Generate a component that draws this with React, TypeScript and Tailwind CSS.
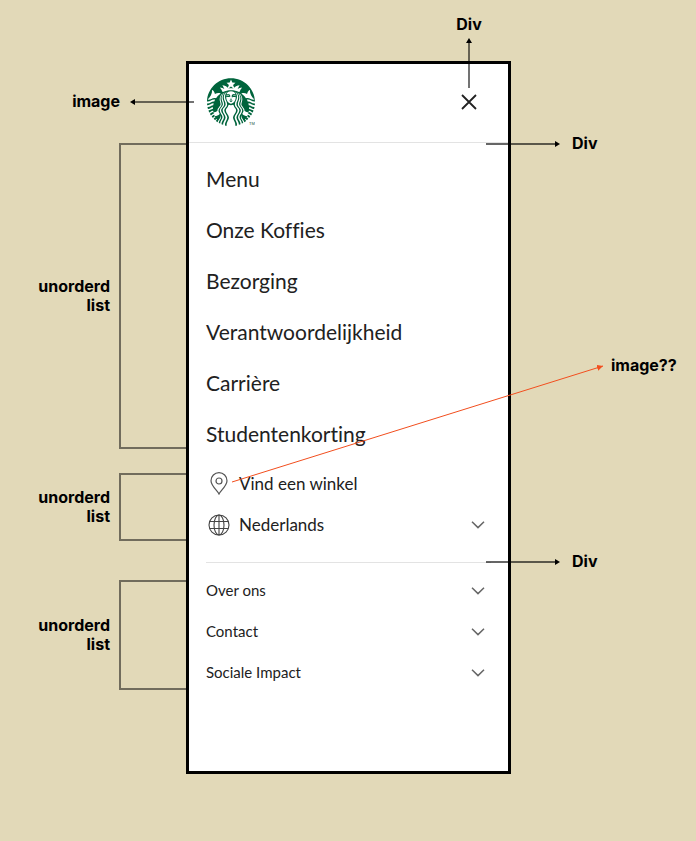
import type { ReactNode } from "react";
import { SiStarbucks } from "react-icons/si";

const menuItems = ["Menu", "Onze Koffies", "Bezorging", "Verantwoordelijkheid", "Carrière", "Studentenkorting"];
const footerItems = ["Over ons", "Contact", "Sociale Impact"];

function Chevron() {
  return (
    <svg viewBox="0 0 14 8" className="h-2 w-3.5 shrink-0" fill="none" stroke="#666" strokeWidth="1.5" aria-hidden="true">
      <path d="M1 0.8 7 6.6 13 0.8" />
    </svg>
  );
}

function PinIcon() {
  return (
    <svg viewBox="0 0 18 23" className="h-[23px] w-[18px]" fill="none" stroke="#555" strokeWidth="1.2" aria-hidden="true">
      <path d="M9 22C7.6 19 1 13.600 1 8.700a8 8 0 0 1 16 0C17 13.600 10.400 19 9 22Z" />
      <circle cx="9" cy="9" r="3" />
    </svg>
  );
}

function GlobeIcon() {
  return (
    <svg viewBox="0 0 22 22" className="size-[22px]" fill="none" stroke="#444" strokeWidth="1.1" aria-hidden="true">
      <circle cx="11" cy="11" r="10" />
      <ellipse cx="11" cy="11" rx="5" ry="10" />
      <path d="M11 1v20M2 7.500h18M2 14.500h18" />
    </svg>
  );
}

function ArrowRight() {
  return (
    <svg className="h-2 w-[74px] shrink-0" aria-hidden="true">
      <path d="M0 4H70" stroke="#000" strokeOpacity="0.6" strokeWidth="2" />
      <path d="M69 1 74 4 69 7Z" />
    </svg>
  );
}

function Bracket({ height, children }: { height: string; children: ReactNode }) {
  return (
    <div className={`flex items-center justify-end gap-[9px] ${height}`}>
      <p className="w-20 text-right">{children}</p>
      <div className="h-full w-[67px] border-2 border-r-0 border-[#716c5c]" />
    </div>
  );
}

export default function App() {
  return (
    <main className="min-h-screen bg-[#e2d9b8] pb-[67px] font-['Inter',sans-serif] text-base leading-[19px] font-bold text-black">
      <div className="flex h-[61px] justify-end pt-[15px] pr-[185px]">
        <div className="relative z-10 flex w-[84px] flex-col items-center gap-1">
          <p>Div</p>
          <svg className="h-[50px] w-2 shrink-0" aria-hidden="true">
            <path d="M4 4V50" stroke="#000" strokeOpacity="0.55" strokeWidth="2" />
            <path d="M1 5 4 0 7 5Z" />
          </svg>
        </div>
      </div>

      <div className="relative grid grid-cols-[186px_1fr_185px]">
        <div className="pt-[31px]">
          <div className="relative z-10 -mr-2 flex items-center justify-end gap-2.5">
            <p>image</p>
            <svg className="h-2 w-16" aria-hidden="true">
              <path d="M4 4H64" stroke="#000" strokeOpacity="0.55" strokeWidth="2" />
              <path d="M5 1 0 4 5 7Z" />
            </svg>
          </div>
          <div className="mt-8">
            <Bracket height="h-[306px]">unorderd list</Bracket>
          </div>
          <div className="mt-6">
            <Bracket height="h-[68px]">unorderd list</Bracket>
          </div>
          <div className="mt-[39px]">
            <Bracket height="h-[110px]">unorderd list</Bracket>
          </div>
        </div>

        <section className="min-h-[713px] border-3 border-black bg-white font-['Lato',sans-serif] font-normal text-[#212121] [font-variant-ligatures:none]">
          <header className="flex h-[79px] items-center justify-between border-b border-[#e3e3e3] px-[17px] pb-0.5">
            <a href="#home" aria-label="Starbucks" className="flex items-end pl-px text-[#00643c]">
              <SiStarbucks className="size-12" />
              <span className="-ml-1.5 font-['Liberation_Sans',sans-serif] text-[4px] leading-1 text-[#003d24] opacity-90">TM</span>
            </a>
            <button type="button" aria-label="Sluiten" className="flex size-[45px] items-center justify-center">
              <svg viewBox="0 0 16 16" className="size-4" stroke="#222" strokeWidth="1.8" aria-hidden="true">
                <path d="M1 1 15 15M15 1 1 15" />
              </svg>
            </button>
          </header>
          <nav className="px-[17px]">
            <ul className="pt-2.5 pb-1 text-[21px] leading-[51px]">
              {menuItems.map((item) => (
                <li key={item}>
                  <a href="#menu">{item}</a>
                </li>
              ))}
            </ul>
            <ul className="border-b border-[#e3e3e3] pb-[17px] text-[17px] leading-[41px]">
              <li>
                <a href="#winkel" className="flex items-center gap-2">
                  <span className="flex w-[25px] justify-center"><PinIcon /></span>
                  Vind een winkel
                </a>
              </li>
              <li>
                <button type="button" className="flex w-full items-center gap-2 pr-1.5">
                  <span className="flex w-[25px] justify-center"><GlobeIcon /></span>
                  <span className="grow text-left">Nederlands</span>
                  <Chevron />
                </button>
              </li>
            </ul>
            <ul className="pt-[7px] text-[15px] leading-[41px]">
              {footerItems.map((item) => (
                <li key={item}>
                  <button type="button" className="flex w-full items-center justify-between pr-1.5">
                    {item}
                    <Chevron />
                  </button>
                </li>
              ))}
            </ul>
          </nav>
        </section>

        <div className="relative z-10 pt-[73px]">
          <div className="-ml-[25px] flex items-center gap-3">
            <ArrowRight />
            <p>Div</p>
          </div>
          <p className="mt-[203px] pl-[100px]">image??</p>
          <div className="mt-[177px] -ml-[25px] flex items-center gap-3">
            <ArrowRight />
            <p>Div</p>
          </div>
        </div>

        <div className="pointer-events-none absolute top-[304px] right-[93px] left-[232px] z-20 h-[117px]">
          <svg className="size-full overflow-visible" aria-hidden="true">
            <defs>
              <marker id="tip" viewBox="0 0 6 6" markerWidth="6" markerHeight="6" refX="6" refY="3" orient="auto">
                <path d="M0 0 6 3 0 6Z" fill="#f24e1e" />
              </marker>
            </defs>
            <line x1="0" y1="100%" x2="100%" y2="1" stroke="#f24e1e" markerEnd="url(#tip)" />
          </svg>
        </div>
      </div>
    </main>
  );
}
